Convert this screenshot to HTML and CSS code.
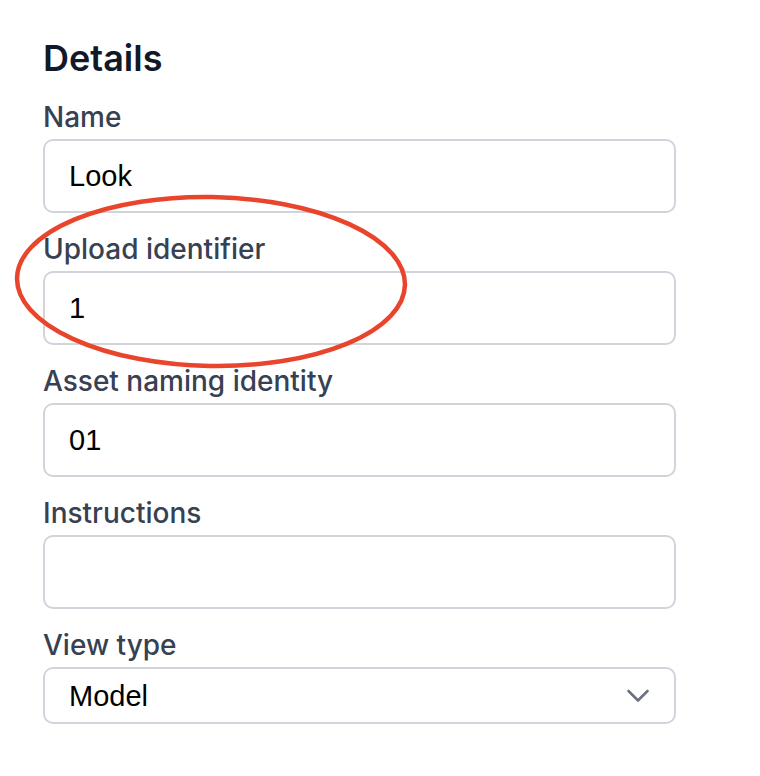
FILE: index.html
```html
<!DOCTYPE html>
<html>
<head>
    <title>Details</title>
    <link rel="stylesheet" href="styles.css">
</head>
<body>
    <div class="panel">
        <h2 class="header">Details</h2>

        <div class="field">
            <label for="name">Name</label>
            <input type="text" id="name" value="Look">
        </div>

        <div class="field">
            <label for="uploadId">Upload identifier</label>
            <input type="text" id="uploadId" value="1">
        </div>

        <div class="field">
            <label for="assetId">Asset naming identity</label>
            <input type="text" id="assetId" value="01">
        </div>

        <div class="field">
            <label for="instructions">Instructions</label>
            <input type="text" id="instructions" value="">
        </div>

        <div class="field">
            <label for="viewType">View type</label>
            <div class="select-wrap">
                <select id="viewType">
                    <option>Model</option>
                    <option>Flat</option>
                    <option>Detail</option>
                </select>
                <svg class="chevron" width="24" height="24" viewBox="0 0 24 24">
                    <path d="M2.5 7 L12 16.5 L21.5 7" fill="none" stroke="#6b7280" stroke-width="2.6" stroke-linecap="round" stroke-linejoin="round"/>
                </svg>
            </div>
        </div>
    </div>

    <!-- annotation drawn over the form -->
    <svg class="markup" width="760" height="776" viewBox="0 0 760 776">
        <ellipse cx="211" cy="281.5" rx="194" ry="84.5" transform="rotate(1 211 281.5)" fill="none" stroke="#e8452c" stroke-width="4.5"/>
    </svg>
</body>
</html>
```

FILE: styles.css
```css
body {
    margin: 0;
    background: #fff;
    font-family: Inter, "Noto Sans", sans-serif;
}
.panel {
    width: 633px;
    padding: 38px 0 40px 43px;
}
.header {
    font-size: 36px;
    line-height: 40px;
    font-weight: 600;
    color: #111827;
    margin: 0 0 19px 0;
}
.field {
    display: flex;
    flex-direction: column;
    margin-bottom: 16px;
}
.field label {
    font-size: 28px;
    line-height: 40px;
    font-weight: 500;
    color: #374151;
    margin-bottom: 2px;
}
.field input, .field select {
    box-sizing: border-box;
    width: 100%;
    height: 74px;
    padding: 0 24px;
    border: 2px solid #d1d5db;
    border-radius: 10px;
    background: #fff;
    font-family: "Liberation Sans", Arial, sans-serif;
    font-size: 29px;
    color: #000;
    outline: none;
}
.select-wrap {
    position: relative;
}
.field select {
    height: 57px;
    appearance: none;
    -webkit-appearance: none;
}
.chevron {
    position: absolute;
    right: 26px;
    top: 50%;
    transform: translateY(-50%);
    pointer-events: none;
}
.markup {
    position: absolute;
    left: 0;
    top: 0;
    pointer-events: none;
}
```
